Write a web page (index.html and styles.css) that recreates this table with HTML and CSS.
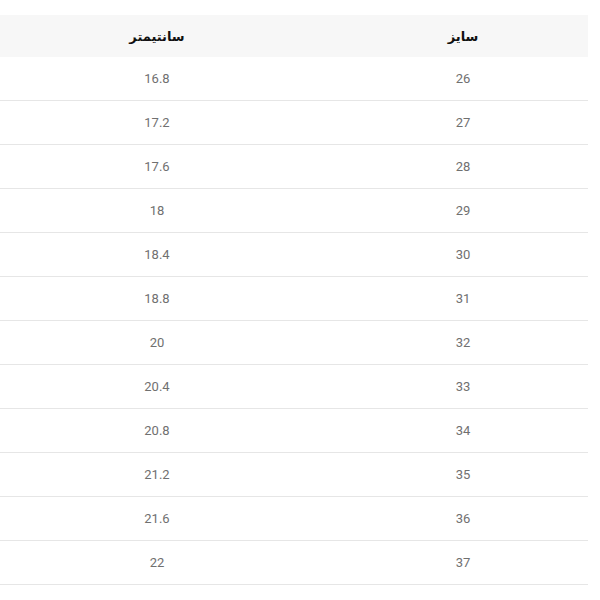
FILE: index.html
```html
<!DOCTYPE html>
<html lang="fa">
<head>
<meta charset="utf-8">
<link rel="stylesheet" href="styles.css">
</head>
<body>
<div class="wrap">
<table class="sizes">
<colgroup><col class="c-size"><col class="c-cm"></colgroup>
<thead>
<tr><th>سایز</th><th>سانتیمتر</th></tr>
</thead>
<tbody>
<tr><td>26</td><td>16.8</td></tr>
<tr><td>27</td><td>17.2</td></tr>
<tr><td>28</td><td>17.6</td></tr>
<tr><td>29</td><td>18</td></tr>
<tr><td>30</td><td>18.4</td></tr>
<tr><td>31</td><td>18.8</td></tr>
<tr><td>32</td><td>20</td></tr>
<tr><td>33</td><td>20.4</td></tr>
<tr><td>34</td><td>20.8</td></tr>
<tr><td>35</td><td>21.2</td></tr>
<tr><td>36</td><td>21.6</td></tr>
<tr><td>37</td><td>22</td></tr>
</tbody>
</table>
</div>
</body>
</html>
```
FILE: styles.css
```css
html, body {
  margin: 0;
  padding: 0;
  background: #fff;
  overflow: hidden;
  direction: ltr;
}
body {
  font-family: Roboto, "DejaVu Sans", sans-serif;
}
.wrap {
  width: 588px;
  direction: rtl;
  padding-top: 15px;
}
.sizes {
  width: 612px;
  border-collapse: collapse;
  table-layout: fixed;
}
.c-size { width: 250px; }
.c-cm { width: 362px; }
.sizes th {
  background: #f7f7f7;
  height: 42px;
  padding: 0;
  font-size: 13px;
  font-weight: bold;
  color: #111;
  text-align: center;
  vertical-align: middle;
}
.sizes td {
  height: 43px;
  padding: 0;
  font-size: 13px;
  color: #707070;
  text-align: center;
  vertical-align: middle;
  border-bottom: 1px solid #e6e6e6;
}
```
